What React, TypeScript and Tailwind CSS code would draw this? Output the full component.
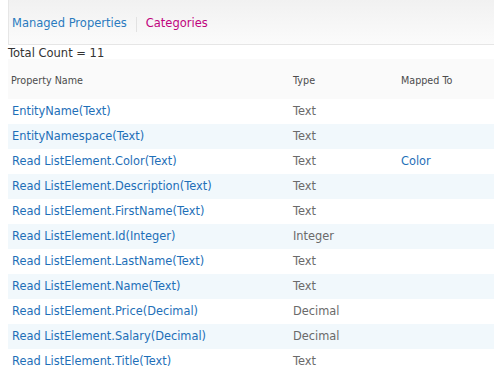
const rows: { name: string; type: string; mapped?: string }[] = [
  { name: 'EntityName(Text)', type: 'Text' },
  { name: 'EntityNamespace(Text)', type: 'Text' },
  { name: 'Read ListElement.Color(Text)', type: 'Text', mapped: 'Color' },
  { name: 'Read ListElement.Description(Text)', type: 'Text' },
  { name: 'Read ListElement.FirstName(Text)', type: 'Text' },
  { name: 'Read ListElement.Id(Integer)', type: 'Integer' },
  { name: 'Read ListElement.LastName(Text)', type: 'Text' },
  { name: 'Read ListElement.Name(Text)', type: 'Text' },
  { name: 'Read ListElement.Price(Decimal)', type: 'Decimal' },
  { name: 'Read ListElement.Salary(Decimal)', type: 'Decimal' },
  { name: 'Read ListElement.Title(Text)', type: 'Text' },
];

export default function App() {
  return (
    <div className="w-[494px] h-[383px] bg-white overflow-hidden font-['DejaVu_Sans',Verdana,sans-serif]">
      {/* tabs */}
      <div className="ml-2 h-[45px] flex items-center border-l border-b border-[#e6e6e6] bg-gradient-to-b from-[#f1f1f1] to-[#fbfbfb] text-[11.5px] pt-[4px]">
        <a className="pl-[3px] text-[#2a7bbf]">Managed Properties</a>
        <span className="mx-[9px] h-[15px] w-px bg-[#e2e2e2]" />
        <a className="text-[#c0047e]">Categories</a>
      </div>

      <div className="pl-2 text-[11.5px] leading-[12px] text-[#333] mt-[2px]">Total Count = 11</div>

      <div className="ml-2">
        <div className="h-[40px] flex items-center bg-[#fafafa] text-[9.6px] text-[#4c4c4c] pt-[5px]">
          <div className="w-[282px] pl-[3px]">Property Name</div>
          <div className="w-[108px] pl-[3px]">Type</div>
          <div className="pl-[3px]">Mapped To</div>
        </div>
        {rows.map((r, i) => (
          <div
            key={r.name}
            className={`h-[25px] flex items-center text-[11.4px] ${i % 2 === 1 ? 'bg-[#f1f8fc]' : 'bg-white'}`}
          >
            <div className="w-[282px] pl-[4px] text-[#1e6fb8]">{r.name}</div>
            <div className="w-[108px] pl-[3px] text-[#6a6a6a]">{r.type}</div>
            <div className="pl-[3px] text-[#1e6fb8]">{r.mapped}</div>
          </div>
        ))}
      </div>
    </div>
  );
}
